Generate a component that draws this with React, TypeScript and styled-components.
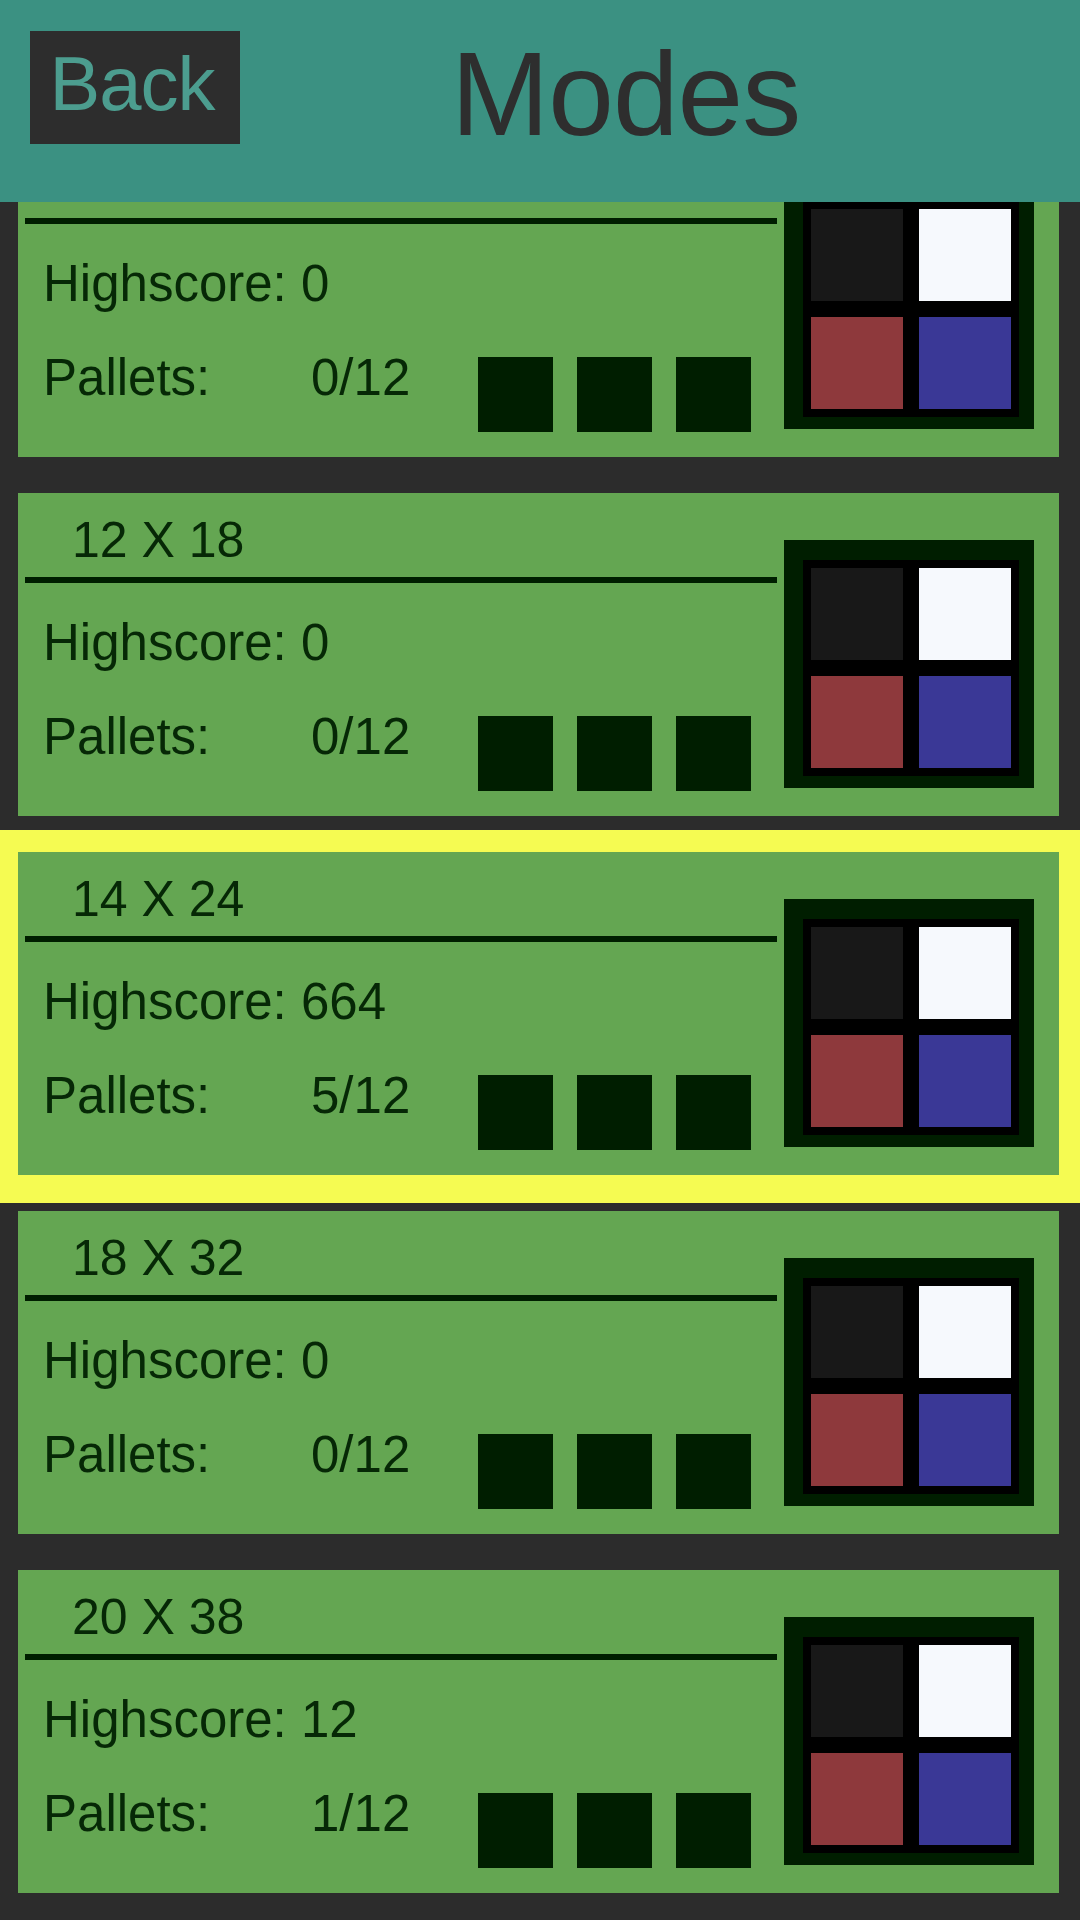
import { useLayoutEffect, useRef } from 'react';
import styled, { createGlobalStyle } from 'styled-components';

interface ModeInfo {
  title: string;
  highscore: number;
  pallets: string;
  selected?: boolean;
}

const MODES: ModeInfo[] = [
  { title: '10 X 14', highscore: 0, pallets: '0/12' },
  { title: '12 X 18', highscore: 0, pallets: '0/12' },
  { title: '14 X 24', highscore: 664, pallets: '5/12', selected: true },
  { title: '18 X 32', highscore: 0, pallets: '0/12' },
  { title: '20 X 38', highscore: 12, pallets: '1/12' },
];

const PALETTE = ['#181818', '#f6f9fd', '#8e393c', '#3a3896'];

const GlobalStyle = createGlobalStyle`
  html, body {
    margin: 0;
    padding: 0;
    background: #2c2c2c;
  }
  * {
    box-sizing: border-box;
  }
`;

const Page = styled.div`
  display: flex;
  flex-direction: column;
  width: 1080px;
  height: 1920px;
  background: #2c2c2c;
  font-family: 'Liberation Sans', Arial, sans-serif;
  overflow: hidden;
`;

const Header = styled.header`
  display: flex;
  align-items: flex-start;
  flex-shrink: 0;
  height: 202px;
  padding: 31px 0 0 30px;
  background: #3b9182;
`;

const BackButton = styled.button`
  display: flex;
  justify-content: center;
  width: 210px;
  height: 113px;
  padding: 0 6px 8px 0;
  border: none;
  background: #2d2d2d;
  color: #4c9d8f;
  font-family: inherit;
  font-size: 76px;
  line-height: 105px;
  letter-spacing: -1px;
  cursor: pointer;
`;

const Title = styled.h1`
  margin: -7px 0 0 211px;
  color: #2e2e2e;
  font-size: 118px;
  font-weight: normal;
  line-height: 140px;
  letter-spacing: -1px;
`;

const Viewport = styled.main`
  flex: 1;
  overflow-y: auto;
  scrollbar-width: none;
  &::-webkit-scrollbar {
    display: none;
  }
`;

const List = styled.div`
  display: flex;
  flex-direction: column;
  gap: 36px;
  padding: 35px 21px 35px 18px;
`;

const Card = styled.section<{ $selected?: boolean }>`
  display: flex;
  align-items: flex-start;
  gap: 7px;
  height: 323px;
  padding: 17px 25px 25px 7px;
  background: #64a652;
  color: #062806;
  box-shadow: ${({ $selected }) => ($selected ? '0 3px 0 25px #f5fb52' : 'none')};
`;

const Info = styled.div`
  display: flex;
  flex-direction: column;
  flex: 1;
`;

const SizeLabel = styled.h2`
  margin: 0 0 0 47px;
  font-size: 50px;
  font-weight: normal;
  line-height: 60px;
`;

const Rule = styled.hr`
  height: 6px;
  margin: 7px 0 0;
  border: none;
  background: #001e00;
`;

const StatRow = styled.div<{ $gap: number }>`
  display: flex;
  align-items: flex-start;
  margin-top: ${({ $gap }) => $gap}px;
  padding: 0 26px 0 18px;
  font-size: 51px;
  line-height: 60px;
  white-space: nowrap;
`;

const StatLabel = styled.span<{ $width?: number }>`
  width: ${({ $width }) => ($width ? `${$width}px` : 'auto')};
`;

const Slots = styled.div`
  display: flex;
  gap: 24px;
  margin: 9px 0 0 auto;
`;

const Slot = styled.span`
  width: 75px;
  height: 75px;
  background: #001e00;
`;

const PaletteBox = styled.div`
  margin-top: 30px;
  padding: 20px 15px 12px 19px;
  background: #001e00;
`;

const PaletteGrid = styled.div`
  display: grid;
  grid-template-columns: repeat(2, 92px);
  grid-auto-rows: 92px;
  gap: 16px;
  padding: 8px;
  background: #000;
`;

const Swatch = styled.span<{ $color: string }>`
  background: ${({ $color }) => $color};
`;

const ModeCard = ({ title, highscore, pallets, selected }: ModeInfo) => {
  return (
    <Card $selected={selected}>
      <Info>
        <SizeLabel>{title}</SizeLabel>
        <Rule />
        <StatRow $gap={30}>
          <StatLabel>Highscore: {highscore}</StatLabel>
        </StatRow>
        <StatRow $gap={34}>
          <StatLabel $width={268}>Pallets:</StatLabel>
          <StatLabel>{pallets}</StatLabel>
          <Slots>
            <Slot />
            <Slot />
            <Slot />
          </Slots>
        </StatRow>
      </Info>
      <PaletteBox>
        <PaletteGrid>
          {PALETTE.map((color) => (
            <Swatch key={color} $color={color} />
          ))}
        </PaletteGrid>
      </PaletteBox>
    </Card>
  );
};

const App = () => {
  const viewportRef = useRef<HTMLElement>(null);

  // the list is shown scrolled a little, first card tucked under the header
  useLayoutEffect(() => {
    if (viewportRef.current) viewportRef.current.scrollTop = 103;
  }, []);

  return (
    <>
      <GlobalStyle />
      <Page>
        <Header>
          <BackButton>Back</BackButton>
          <Title>Modes</Title>
        </Header>
        <Viewport ref={viewportRef}>
          <List>
            {MODES.map((mode) => (
              <ModeCard key={mode.title} {...mode} />
            ))}
          </List>
        </Viewport>
      </Page>
    </>
  );
};

export default App;
